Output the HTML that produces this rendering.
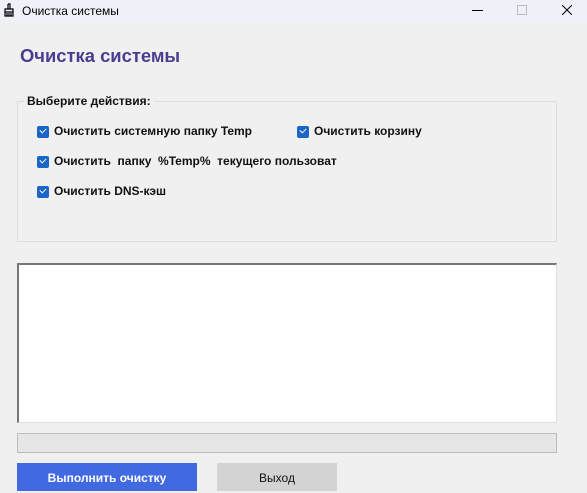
<!DOCTYPE html><html><head><meta charset="utf-8"><style>
body{margin:0;width:587px;height:491px;background:#f0f0f0;font-family:"Liberation Sans",sans-serif;position:relative;overflow:hidden}
.a{position:absolute}
.cb{position:absolute;width:12px;height:12px;background:#1a66c7;border-radius:2px}
.cb:after{content:"";position:absolute;left:3px;top:2px;width:5px;height:3px;border-left:1.3px solid #fff;border-bottom:1.3px solid #fff;transform:rotate(-45deg)}
.t{position:absolute;font-size:12px;font-weight:bold;color:#111;white-space:pre}
</style></head><body>
<div class="a" style="left:0;top:0;width:587px;height:22px;background:#eef2f8"></div>
<svg class="a" style="left:3px;top:3px" width="12" height="14" viewBox="0 0 12 14"><path d="M5 1h2v5M5 1v5M2 6h8v7H2zM2 9h8M4 13v-3M6 13v-3M8 13v-3" stroke="#000" fill="none" stroke-width="1.2"/></svg>
<div class="a" style="left:22px;top:4px;font-size:12px;color:#000">Очистка системы</div>
<div class="a" style="left:472px;top:10px;width:11px;border-top:1px solid #000"></div>
<div class="a" style="left:517px;top:5px;width:8px;height:8px;border:1px solid #bbb"></div>
<svg class="a" style="left:562px;top:5px" width="10" height="10"><path d="M0 0L10 10M10 0L0 10" stroke="#000" stroke-width="1"/></svg>
<div class="a" style="left:20px;top:45px;font-size:18.4px;font-weight:bold;color:#4b3d8f">Очистка системы</div>
<div class="a" style="left:17px;top:101px;width:538px;height:139px;border:1px solid #dcdcdc"></div>
<div class="t" style="left:24px;top:94px;background:#f0f0f0;padding:0 3px">Выберите действия:</div>
<div class="cb" style="left:37px;top:126px"></div><div class="t" style="left:54px;top:124px">Очистить системную папку Temp</div>
<div class="cb" style="left:297px;top:126px"></div><div class="t" style="left:314px;top:124px">Очистить корзину</div>
<div class="cb" style="left:37px;top:156px"></div><div class="t" style="left:54px;top:154px">Очистить  папку  %Temp%  текущего пользоват</div>
<div class="cb" style="left:37px;top:186px"></div><div class="t" style="left:54px;top:184px">Очистить DNS-кэш</div>
<div class="a" style="left:17px;top:263px;width:537px;height:157px;background:#fff;border:1px solid #ddd;border-left:2px solid #777;border-top:2px solid #777"></div>
<div class="a" style="left:17px;top:433px;width:538px;height:18px;background:#e6e6e6;border:1px solid #bcbcbc"></div>
<div class="a" style="left:17px;top:463px;width:180px;height:28px;background:#4169e1;color:#fff;font-size:12px;font-weight:bold;text-align:center;line-height:30px">Выполнить очистку</div>
<div class="a" style="left:217px;top:463px;width:120px;height:28px;background:#d3d3d3;color:#111;font-size:12px;text-align:center;line-height:30px">Выход</div>
</body></html>
